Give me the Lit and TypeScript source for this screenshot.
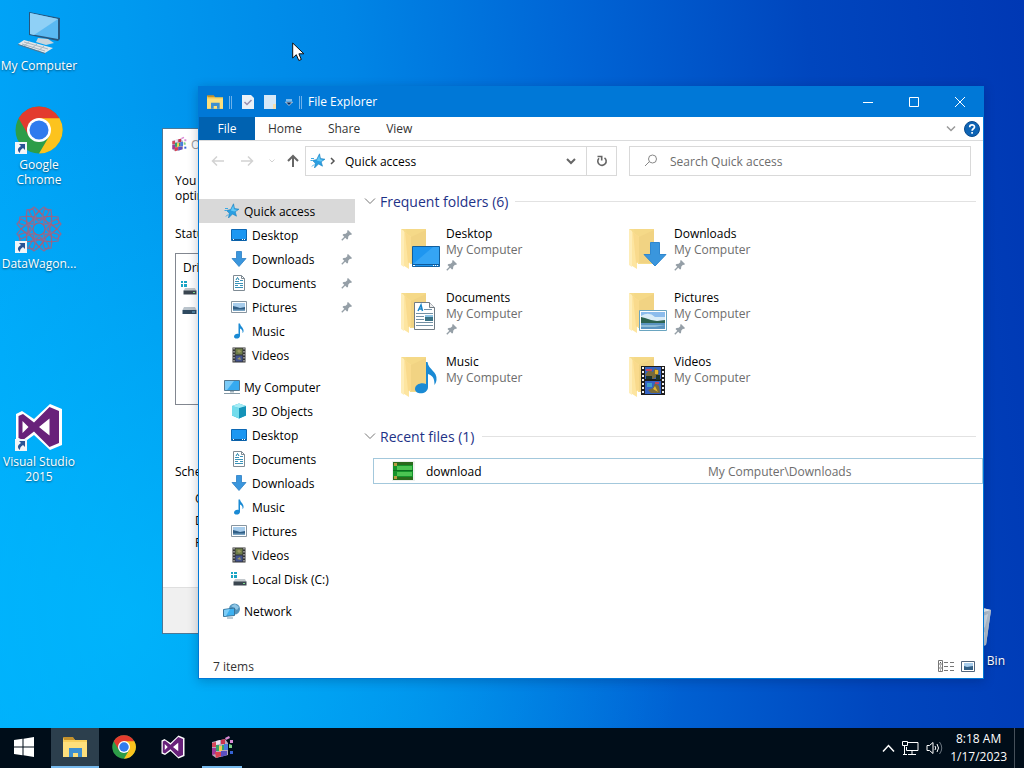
import { LitElement, html, svg, css, nothing, TemplateResult } from "lit";
import { customElement, state } from "lit/decorators.js";

const shape = (w: number, h: number, body: unknown, vw = w, vh = h) =>
  html`<svg class="ico" width=${w} height=${h} viewBox="0 0 ${vw} ${vh}" aria-hidden="true">${body}</svg>`;

const bigFolder = (overlay: unknown) =>
  shape(44, 44, svg`<path d="M5 2h25v35H14z" fill="#f6dc8c"/><path d="M10 2h20v34H17z" fill="#f5d988"/><path d="M15 10L30 3v33H15z" fill="#efcf80" opacity=".6"/>
    <path d="M5 2l10 8v25l-2 1v6l-8-5z" fill="#fde5a0"/><path d="M9 5l6 5v25l-3 1z" fill="#f9da8c"/><path d="M5 2v36l3 2V4z" fill="#feedb8"/>${overlay}`);

const drops: Record<string, () => TemplateResult> = {
  star: () => shape(16, 16, svg`<path d="M9.500.8l1 4.700 4.500.7-3.800 2.600 1.300 4.400-4-2.200L4.500 15l.8-4.800L2.500 7.500l4.200-1z" fill="#2a9fe2" stroke="#1b82c0" stroke-width=".6"/><path d="M9.300 2.500l.7 3.800 3.400.6-3 1.600-3.600-1z" fill="#63c8f6"/><path d="M1 5.500h3M.5 7.500h2M2 13.500l2-2" stroke="#3ba8e4"/>`),
  desktop: () => shape(16, 16, svg`<path d="M.5 2.500h15v11H.5z" fill="#1c97f2" stroke="#0d68b4"/><path d="M1 12h14v1.500H1z" fill="#0b5a9c"/><path d="M2 12.500h1M11 12.500h1M13 12.500h1" stroke="#fff"/>`),
  downloads: () => shape(16, 16, svg`<path d="M5.500.5h5v7h4.500L8 15.500 1 7.500h4.500z" fill="#3a96dd" stroke="#2b7fc4" stroke-width=".8"/>`),
  documents: () => shape(16, 16, svg`<path d="M2.500.5h8l3 3v12h-11z" fill="#fff" stroke="#7f8b94"/><path d="M10.500.5v3h3" fill="none" stroke="#7f8b94"/><path d="M4 6.500h4M9 5.500h3M4 8.500h8M4 10.500h3M9 10.500h3M4 12.500h8" stroke="#3b93b8"/><path d="M5 5l1.500-2.500L8 5" fill="none" stroke="#1b7fa8"/>`),
  pictures: () => shape(16, 16, svg`<path d="M.5 2.500h15v11H.5z" fill="#fff" stroke="#8795a0"/><path d="M2 4h12v8H2z" fill="#a8cdec"/><path d="M2 7l4 1 3 1 5-1v4H2z" fill="#315f86"/><path d="M2 10.500h12V12H2z" fill="#7aa5c4"/>`),
  music: () => shape(16, 16, svg`<path d="M7.500.5H9c.5 3.500 4 4 3.500 8-.3 1-.8 1.500-1 1.500.5-2.500-1-4-2.500-4.500V13c0 3-6 3.500-6 .8 0-2.500 3-3.500 4.500-2.700z" fill="#1a8ad4"/>`),
  videos: () => shape(16, 16, svg`<path d="M1.500.5h13v15h-13z" fill="#333"/><path d="M3 1v14M13 1v14" stroke="#e8e8e8" stroke-dasharray="1.500 1.500"/><path d="M4.500 1.500h7v6h-7z" fill="#6f7f4a"/><path d="M4.500 8.500h7v6h-7z" fill="#43538e"/><path d="M6 4l2-1.500 2.500 2L8 6zM6 12l3-2 1 3z" fill="#9a9860"/>`),
  computer: () => shape(18, 16, svg`<path d="M1.500 1.500h15v10h-15z" fill="#35aaf0" stroke="#54788f"/><path d="M2 2h9L4 11H2z" fill="#7bcbf8"/><path d="M7 12h4v1.500H7z" fill="#9fb1bc"/><path d="M1 14.500h16" stroke="#8599a5"/>`),
  objects: () => shape(16, 16, svg`<path d="M1 3l7-2.500L15 3v9.500L8 15.500 1 12.500z" fill="#2bb3d2"/><path d="M1 3l7 2v10.500l-7-3z" fill="#73dcec"/><path d="M15 3L8 5v10.500l7-3z" fill="#1593b8"/><path d="M1 3l7-2.500L15 3 8 5z" fill="#a6edf6"/>`),
  disk: () => shape(16, 16, svg`<path d="M0 1h2v2H0zM3 1h3v2H3zM0 4h2v3H0zM3 4h3v3H3z" fill="#1aa5c4"/><path d="M4 8h10l1.500 3h-13z" fill="#c2c8cc"/><path d="M2.500 10.500h13v4h-13z" fill="#3b4650"/><path d="M12 12.500h2" stroke="#7fdc8f"/>`),
  drive: () => shape(16, 16, svg`<path d="M3 6h11l1.500 3h-14z" fill="#bac4cc"/><path d="M1.500 9h14v4h-14z" fill="#2f4a60"/><path d="M11 11h3" stroke="#6fb7dd"/>`),
  network: () => shape(18, 16, svg`<circle cx="11.500" cy="6" r="5.500" fill="#5294bd"/><path d="M8 3l4-2 4 3-2 3-3-2z" fill="#8fc6e6"/><path d="M.5 6.500l11-1.500v7.500l-11 1z" fill="#3db1f1" stroke="#39749a"/><path d="M1 7l6-1-4 7H1z" fill="#7dcdf7"/><path d="M4 15h6" stroke="#7d97a7"/>`),
};

const bigDrops: Record<string, unknown> = {
  desktop: svg`<path d="M16.500 19.500h27v20h-27z" fill="#1e96f0" stroke="#125f9e"/><path d="M17 37l20-17h6v17z" fill="#45aff8" opacity=".6"/><path d="M17 37.500h26" stroke="#0e5a9a"/><path d="M17 38.500h2M37 38.500h1M39 38.500h1M41 38.500h1" stroke="#fff"/>`,
  downloads: svg`<path d="M26.500 15.500h9v12h6.500L31 39 20 27.500h6.500z" fill="#3a96dd" stroke="#2f87cf"/>`,
  documents: svg`<path d="M18.500 11.500h15l5 5v22h-20z" fill="#fff" stroke="#707b84"/><path d="M33.500 11.500v5h5" fill="#eee" stroke="#707b84"/><path d="M22 20l3-6 1.500 6m-4-2h4" fill="none" stroke="#1a86c9" stroke-width="1.500"/><path d="M28 18.500h8M20 22.500h17M20 25.500h8M20 28.500h8M20 31.500h17M20 34.500h17" stroke="#7390a4"/><path d="M29 24h8v6h-8z" fill="#3a7386"/><path d="M29 24h8v2h-8z" fill="#8fc4e4"/>`,
  pictures: svg`<path d="M15.500 19.500h27v20h-27z" fill="#fff" stroke="#6aa5c0"/><path d="M17 21h24v17H17z" fill="#8cbcec"/><path d="M17 25q8-5 14 1h10v4H17z" fill="#d9ecf7"/><path d="M17 26l4 1 6 2 6 1 8-1v3H17z" fill="#2d6350"/><path d="M17 32h24v6H17z" fill="#5a94c0"/><path d="M17 34h24l-10 2H17z" fill="#8fbcd6"/>`,
  music: svg`<path d="M30 7h1.500c1 8 10 9 9 18-.5 3-1.500 4-2 5 0-6-1-9-6.500-11v13c0 8-13 8-13 2 0-5 7-7 11-5z" fill="#1a8ad4"/>`,
  videos: svg`<path d="M17 11h24v29H17z" fill="#1d1d1d"/><path d="M19 12v27M39 12v27" stroke="#f2f2f2" stroke-width="2" stroke-dasharray="2 2"/><path d="M21 12h16v12H21zM21 26h16v13H21z" fill="#3463c4"/><path d="M21 20l4-5 4 2 2-4 4 3-1 5-5 3zM24 35l5-2 2-5 4 3 1 7h-9z" fill="#7a6b3a"/><path d="M31 15h3v4h-3zM31 31l-2 3 5 3z" fill="#e4b52c"/><path d="M22 14h6v2h-6zM31 27h4v2h-4z" fill="#c1455f"/><path d="M22 21h6v3h-6zM32 20h4v5h-4z" fill="#1c3530"/><path d="M23 28h5v4h-5z" fill="#3fa0c8"/>`,
};

const pin = shape(12, 12, svg`<path d="M7 1l4 4-1 1-1-.3L7.300 7.500 7 10 6 10.500 1.500 6l1-1 2.200-.2L6.500 3 6 2z" fill="#959fa7"/><path d="M4 8L.8 11.200" stroke="#959fa7" stroke-width="1.300"/>`);

const chrome = (s: number) => shape(s, s, svg`
  <circle cx="24" cy="24" r="23.500" fill="#2d9d48"/>
  <path d="M24 12h20.400A23.500 23.500 0 0 1 24 47.500L34.400 30z" fill="#fcc31e"/>
  <path d="M3.600 12.300A23.500 23.500 0 0 1 44.400 12.300H24L13.600 29.600z" fill="#e33b2e"/>
  <circle cx="24" cy="24" r="12" fill="#fff"/><circle cx="24" cy="24" r="9.500" fill="#2f7bee"/>`, 48, 48);

const visualStudio = (s: number) => shape(s, s, svg`
  <path d="M35 1l12 5v36l-12 5-16-15-11 8-7-3V11l6-3 12 8z" fill="#fff"/>
  <path d="M34.500 4L44 8v32l-9.500 4L19 28.500 8 37l-4.500-2V13L8 11l11 8.500z" fill="#68217a"/>
  <path d="M34.500 15.500v17L24 24zM7.500 18v12l6-6z" fill="#fff"/>`, 48, 48);

const explorerIcon = (w: number, h: number) => shape(w, h, svg`
  <path d="M0 3h10l2 2h12v17H0z" fill="#f7cf5c"/><path d="M0 2h10l2 3H1z" fill="#c4912c"/><path d="M0 7h24v15H0z" fill="#fddf7c"/>
  <path d="M6 22v-9h13v9h-4v-4h-5v4z" fill="#3d8fd1"/>`, 24, 24);

const defrag = (s: number) => shape(s, s, svg`
  <path d="M2 7l13-3 3 4v12L6 23l-4-3z" fill="#b7a9bb"/>
  <path d="M2 8l4-1v5H2z" fill="#d7475a"/><path d="M6 6l4-1v4l-4 1z" fill="#efe0ef"/><path d="M11 5l4-1v5h-4z" fill="#cb3350"/>
  <path d="M6 10h3v6H6zM12 10h2v5h-2z" fill="#37a26a"/><path d="M9 11h3v5H9z" fill="#f4d04e"/><path d="M14 9h4v6h-4z" fill="#4a7ddc"/>
  <path d="M2 13h4v6l-4 1z" fill="#9d3b9b"/><path d="M5 17h6v4l-5 2z" fill="#db4253"/><path d="M11 16h6v4l-6 2z" fill="#5b4fc0"/>
  <path d="M15 3l4-2 1 2-4 2zM20 5h3v3h-3z" fill="#d98bd6"/><path d="M19 9l3 1v3h-3z" fill="#7fd08a"/><path d="M20 16h3v3h-3z" fill="#3663d4"/>`, 24, 24);

const bigComputer = shape(48, 48, svg`
  <path d="M14 5l31 6v21l-2 2-29-6z" fill="#26567e"/><path d="M15 6l28 6v20L15 27z" fill="#5ab9f2"/><path d="M15 6l28 6-24 16-4-1z" fill="#8fd0f6"/>
  <path d="M23 31l10 1 6 4-8 2-10-3z" fill="#c9d5dc"/><path d="M9 33l29 8-8 5L3 37z" fill="#e2e7ea"/><path d="M9 35l24 7M7 37l23 7M15 34l-6 5M22 37l-6 5M29 39l-6 5" stroke="#a8b6c0"/>
  <path d="M3 37l27 9v1L3 38z" fill="#54758c"/>`);

const petals = [0, 45, 90, 135, 180, 225, 270, 315];
const mandala = shape(48, 48, svg`<g fill="none" stroke="#8f6a90" stroke-width="1.200">
  ${petals.map((a) => svg`<g transform="rotate(${a} 24 24)"><path d="M24 6l5-4 5 4-4 8 4 6M24 6l-5-4-5 4 4 8-4 6"/><path d="M24 17l-5-5 5-6 5 6z" stroke="#a85f78"/><path d="M17 12l7 5 7-5" stroke="#6f7cab"/></g>`)}
  <circle cx="24" cy="24" r="6" stroke="#a85f78"/></g>`);

const bin = shape(48, 48, svg`<path d="M8 8l16-4 17 4-5 35-12 3-11-3z" fill="#c8d3dd"/><path d="M8 8l16 5 17-5-17-4z" fill="#eef3f6"/><path d="M24 13l17-5-5 35-12 3z" fill="#b3c0ce"/><path d="M33 14l5-2-3 13-4 3zM32 32l3-2-1 10-4 2z" fill="#d6dfe7"/>`);

const shortcut = html`<svg class="shortcut" width="12" height="12" viewBox="0 0 12 12" aria-hidden="true"><path d="M0 0h12v12H0z" fill="#f2f5f8"/><path d="M4 2h6v6L8 6C5.500 7.500 5 9 5 11 1.500 8.500 3 5.500 6 4z" fill="#2a5394"/></svg>`;

const stroke = (d: string, w: number, h: number, width = 1) =>
  shape(w, h, svg`<path d=${d} fill="none" stroke="currentColor" stroke-width=${width}/>`);

interface Shortcut { label: string; art: TemplateResult; linked: boolean; row: number }
const shortcuts: Shortcut[] = [
  { label: "My Computer", art: bigComputer, linked: false, row: 1 },
  { label: "Google Chrome", art: chrome(48), linked: true, row: 2 },
  { label: "DataWagon...", art: mandala, linked: true, row: 3 },
  { label: "Visual Studio 2015", art: visualStudio(48), linked: true, row: 5 },
];

interface Place { label: string; icon: string; pinned?: boolean }
const tree: { root: Place; children: Place[] }[] = [
  {
    root: { label: "Quick access", icon: "star" },
    children: [
      { label: "Desktop", icon: "desktop", pinned: true },
      { label: "Downloads", icon: "downloads", pinned: true },
      { label: "Documents", icon: "documents", pinned: true },
      { label: "Pictures", icon: "pictures", pinned: true },
      { label: "Music", icon: "music" },
      { label: "Videos", icon: "videos" },
    ],
  },
  {
    root: { label: "My Computer", icon: "computer" },
    children: [
      { label: "3D Objects", icon: "objects" },
      { label: "Desktop", icon: "desktop" },
      { label: "Documents", icon: "documents" },
      { label: "Downloads", icon: "downloads" },
      { label: "Music", icon: "music" },
      { label: "Pictures", icon: "pictures" },
      { label: "Videos", icon: "videos" },
      { label: "Local Disk (C:)", icon: "disk" },
    ],
  },
  { root: { label: "Network", icon: "network" }, children: [] },
];

const folders: Place[] = [
  { label: "Desktop", icon: "desktop", pinned: true },
  { label: "Downloads", icon: "downloads", pinned: true },
  { label: "Documents", icon: "documents", pinned: true },
  { label: "Pictures", icon: "pictures", pinned: true },
  { label: "Music", icon: "music" },
  { label: "Videos", icon: "videos" },
];

const base = css`
  * { box-sizing: border-box; }
  button, input { font: inherit; color: inherit; background: none; border: 0; padding: 0; margin: 0; text-align: left; }
  h1, h2, p, ul { margin: 0; padding: 0; font: inherit; list-style: none; }
  .ico { display: block; flex: none; }
`;

@customElement("optimize-window")
class OptimizeWindow extends LitElement {
  static styles = [base, css`
    :host { display: flex; flex-direction: column; background: #fff; border: 1px solid #4d7896; color: #000; white-space: nowrap; overflow: hidden; }
    .title { display: flex; align-items: center; gap: 4px; height: 30px; padding-left: 8px; color: #999; }
    .body { flex: 1; display: flex; flex-direction: column; padding: 14px 12px 0; line-height: 15px; }
    .status { margin-top: 23px; }
    .drives { margin-top: 12px; height: 152px; border: 1px solid #828790; padding: 6px 7px; display: flex; flex-direction: column; gap: 5px; }
    .drives .ico { margin-left: -2px; }
    .schedule { margin-top: 59px; }
    .details { padding: 9px 0 0 20px; line-height: 22px; }
    .foot { height: 46px; background: #f0f0f0; border-top: 1px solid #dfdfdf; }
  `];
  render() {
    return html`
      <div class="title">${defrag(16)}<span>Optimize Drives</span></div>
      <div class="body">
        <p>You can</p>
        <p>optimize</p>
        <p class="status">Status</p>
        <div class="drives"><span>Drive</span>${drops.disk()}${drops.drive()}</div>
        <p class="schedule">Scheduled</p>
        <div class="details"><p>On</p><p>Drives</p><p>Frequency</p></div>
      </div>
      <div class="foot"></div>`;
  }
}

@customElement("explorer-window")
class ExplorerWindow extends LitElement {
  static styles = [base, css`
    :host { display: flex; flex-direction: column; background: #fff; border: 1px solid #0078d7; color: #000; box-shadow: 0 2px 10px rgba(0, 20, 60, .25); }
    .title { display: flex; align-items: center; height: 30px; background: #0078d7; color: #fff; padding-left: 8px; }
    .title h1 { padding-bottom: 1px; }
    .quick { display: flex; align-items: center; gap: 9px; margin-right: 6px; }
    .bar { width: 3px; height: 13px; border: solid #6fb2ea; border-width: 0 1px; margin-left: -3px; }
    .caption { margin-left: auto; display: flex; }
    .caption button { width: 46px; height: 30px; display: grid; place-items: center; }
    .tabs { display: flex; align-items: center; height: 24px; border-bottom: 1px solid #dadbdc; color: #333; }
    .tabs button { height: 23px; padding: 0 13px; }
    .tabs .file { width: 56px; padding: 0; text-align: center; background: #0062b1; color: #fff; }
    .tabs .end { margin-left: auto; display: flex; align-items: center; gap: 8px; padding-right: 3px; color: #999; }
    .tabs .end button { padding: 0; display: grid; place-items: center; }
    .help { width: 16px; }
    .nav { display: flex; align-items: center; height: 40px; padding: 0 12px; }
    .arrows { display: flex; align-items: center; width: 94px; gap: 15px; color: #d2d2d2; }
    .arrows .up { color: #666; }
    .arrows .recent { width: 6px; margin-right: -4px; }
    .address { flex: 0 1 312px; height: 30px; display: flex; align-items: center; border: 1px solid #d9d9d9; }
    .crumb { flex: 1; display: flex; align-items: center; gap: 4px; padding-left: 4px; color: #555; }
    .crumb button { padding-left: 5px; color: #000; }
    .address .drop, .address .refresh { width: 30px; height: 28px; display: grid; place-items: center; color: #666; }
    .address .refresh { border-left: 1px solid #d9d9d9; }
    .search { flex: 1; margin-left: 12px; height: 30px; display: flex; align-items: center; gap: 12px; border: 1px solid #d9d9d9; padding-left: 14px; color: #888; }
    .search input { flex: 1; min-width: 0; outline: 0; color: #333; }
    .search input::placeholder { color: #6d6d6d; opacity: 1; }
    .work { flex: 1; min-height: 0; display: flex; padding-top: 18px; }
    .tree { width: 156px; flex: none; }
    .tree ul { display: flex; flex-direction: column; margin-bottom: 8px; }
    .node { width: 100%; height: 24px; display: flex; align-items: center; gap: 5px; padding: 0 2px 0 32px; }
    .node.root { padding-left: 24px; gap: 3px; }
    .node.root .ico { width: 18px; }
    .node.on { background: #d9d9d9; }
    .node span { flex: 1; }
    .files { flex: 1; min-width: 0; padding: 0 0 0 9px; }
    .group { display: flex; align-items: center; gap: 4px; height: 20px; color: #1e3287; font-size: 14px; margin: -8px 7px 0 0; }
    .group::after { content: ""; flex: 1; height: 1px; background: #e2e2e2; margin-left: 3px; }
    .group .ico { color: #777; }
    .tiles { display: grid; grid-template-columns: 228px 228px; grid-auto-rows: 64px; padding: 15px 0 0 32px; }
    .tile { display: flex; align-items: flex-start; gap: 6px; height: 48px; line-height: 16px; }
    .art { padding-top: 1px; }
    .sub { color: #6d6d6d; display: block; }
    .tile .pin { display: block; padding-top: 1px; }
    .recent-head { margin-top: 8px; }
    .file-row { width: calc(100% - 9px); height: 26px; margin: 12px 0 0 9px; border: 1px solid #a3c8dc; display: flex; align-items: center; padding-left: 18px; }
    .file-row .name { flex: 0 0 293px; padding-left: 11px; }
    .file-row .where { color: #6d6d6d; }
    .foot { height: 24px; display: flex; align-items: center; padding: 0 8px 0 14px; color: #333; }
    .views { margin-left: auto; display: flex; gap: 6px; }
  `];

  @state() private current = "Quick access";

  private node(p: Place, root: boolean) {
    return html`<li><button class="node ${root ? "root" : ""} ${root && p.label === this.current ? "on" : ""}"
      @click=${() => { if (root) this.current = p.label; }}>
      ${drops[p.icon]()}<span>${p.label}</span>${p.pinned ? pin : nothing}</button></li>`;
  }

  render() {
    return html`
      <header class="title">
        <div class="quick">
          ${explorerIcon(16, 16)}<i class="bar"></i>
          ${shape(14, 16, svg`<path d="M1 1h9l3 3v11H1z" fill="#eaf1f8"/><path d="M3.500 8L6 10.500 10.500 6" fill="none" stroke="#9a8fae" stroke-width="1.500"/>`)}
          ${shape(12, 16, svg`<path d="M0 1h12v14H0z" fill="#d5e8f8"/><path d="M9 10h3v5H9z" fill="#f4deb0"/>`)}
          ${shape(8, 8, svg`<path d="M1 2h6" stroke="#fff"/><path d="M.5 4h7L4 7.500z" fill="#0a2a5c" stroke="#fff" stroke-width=".7"/>`)}
          <i class="bar"></i>
        </div>
        <h1>File Explorer</h1>
        <div class="caption">
          <button aria-label="Minimize">${stroke("M0 5.500h10", 10, 10)}</button>
          <button aria-label="Maximize">${stroke("M.5.5h9v9h-9z", 10, 10)}</button>
          <button aria-label="Close">${stroke("M0 0l10 10M10 0L0 10", 10, 10)}</button>
        </div>
      </header>
      <div class="tabs">
        <button class="file">File</button><button>Home</button><button>Share</button><button>View</button>
        <div class="end">
          <button aria-label="Expand ribbon">${stroke("M1 1.500l4 4 4-4", 10, 7, 1.5)}</button>
          <button class="help" aria-label="Help">
            <svg class="ico" width="16" height="16" viewBox="0 0 16 16"><circle cx="8" cy="8" r="7.500" fill="#0e64b4" stroke="#0a4a8c"/><path d="M5.700 6.200C5.700 3.200 10.500 3.200 10.500 6c0 1.800-2.400 1.800-2.400 3.700M8.100 11v1.800" fill="none" stroke="#fff" stroke-width="1.700"/></svg>
          </button>
        </div>
      </div>
      <div class="nav">
        <div class="arrows">
          <button aria-label="Back">${stroke("M13 7H1.500M6 2.500L1.500 7 6 11.500", 14, 14, 1.5)}</button>
          <button aria-label="Forward">${stroke("M1 7h11.500M8 2.500L12.500 7 8 11.500", 14, 14, 1.5)}</button>
          <button class="recent" aria-label="Recent locations">${stroke("M.5.5L3 3 5.500.5", 6, 4)}</button>
          <button class="up" aria-label="Up">${stroke("M7 13V2M2 7l5-5 5 5", 14, 14, 2)}</button>
        </div>
        <div class="address">
          <div class="crumb">${drops.star()}${stroke("M1 1l3 3-3 3", 6, 8, 1.5)}<button>Quick access</button></div>
          <button class="drop" aria-label="Previous locations">${stroke("M1 1l4 4 4-4", 10, 7, 2)}</button>
          <button class="refresh" aria-label="Refresh">${shape(12, 12, svg`<path d="M3 3.200A4.200 4.200 0 1 0 8.500 2.800" fill="none" stroke="currentColor" stroke-width="1.600"/><path d="M1.500 1.500h4.200v4" fill="none" stroke="currentColor" stroke-width="1.600"/>`)}</button>
        </div>
        <label class="search">
          ${stroke("M1 12l4-4M4.500 5a4 4 0 1 0 8 0 4 4 0 1 0-8 0", 14, 14)}
          <input type="text" placeholder="Search Quick access" aria-label="Search Quick access" />
        </label>
      </div>
      <div class="work">
        <nav class="tree">
          ${tree.map((s) => html`<ul>${this.node(s.root, true)}${s.children.map((c) => this.node(c, false))}</ul>`)}
        </nav>
        <main class="files">
          <h2 class="group">${stroke("M1 1.500l5 5 5-5", 12, 8)}Frequent folders (6)</h2>
          <div class="tiles">
            ${folders.map((f) => html`<button class="tile"><span class="art">${bigFolder(bigDrops[f.icon])}</span>
              <span>${f.label}<span class="sub">My Computer</span>${f.pinned ? html`<span class="pin">${pin}</span>` : nothing}</span></button>`)}
          </div>
          <h2 class="group recent-head">${stroke("M1 1.500l5 5 5-5", 12, 8)}Recent files (1)</h2>
          <button class="file-row">
            ${shape(23, 20, svg`<path d="M0 0h23v20H0z" fill="#eef1ee"/><path d="M1 1h20v18H1z" fill="#14922b"/><path d="M1 1h20v3H1zM1 16h20v3H1z" fill="#2a6a1c"/><path d="M5 5h15v4H5zM5 11h15v4H5z" fill="#4cc452"/><path d="M1 9h20v1H1z" fill="#0a6d1e"/><path d="M2 2h3v3H2zM2 15h3v3H2z" fill="#b79a3f"/>`)}
            <span class="name">download</span><span class="where">My Computer\\Downloads</span>
          </button>
        </main>
      </div>
      <footer class="foot">
        <span>7 items</span>
        <div class="views">
          <button aria-label="Details view">${shape(17, 14, svg`<path d="M.5 1.500h4v11h-4zM.5 5h4M.5 9h4" fill="none" stroke="#777"/><path d="M2 3.500h1M2 7h1M2 11h1" stroke="#555"/><path d="M6 3.500h4M12 3.500h4M6 7.500h4M12 7.500h4M6 11.500h4M12 11.500h4" stroke="#777"/>`)}</button>
          <button aria-label="Large icons view">${shape(14, 14, svg`<path d="M.5 2.500h13v10H.5z" fill="#fff" stroke="#51657c"/><path d="M3 4h9v7H3z" fill="#a8cdec"/><path d="M3 7l3 1 6-1v4H3z" fill="#315f86"/>`)}</button>
        </div>
      </footer>`;
  }
}

@customElement("app-root")
class AppRoot extends LitElement {
  static styles = [base, css`
    :host { display: grid; grid-template-rows: 1fr 40px; height: 100vh; overflow: hidden; font: 12px/15px "Open Sans", "Noto Sans", sans-serif; color: #fff; }
    .desktop { position: relative; overflow: hidden;
      background: radial-gradient(ellipse 55% 70% at 12% 85%, rgba(0, 190, 255, .65), rgba(0, 190, 255, 0)), linear-gradient(84deg, #00a8fa 0%, #009af0 18%, #0086e6 38%, #0066d6 58%, #0046be 80%, #0038b4 100%); }
    .icons { display: grid; grid-template-columns: 78px; grid-auto-rows: 99px; padding-top: 7px; }
    .shortcut-item { display: flex; flex-direction: column; align-items: center; gap: 3px; text-align: center; text-shadow: 0 1px 2px rgba(0, 0, 0, .5); }
    .art { position: relative; }
    .shortcut { position: absolute; left: 0; bottom: 0; }
    .bin { position: absolute; right: 19px; bottom: 60px; }
    optimize-window { position: absolute; left: 162px; top: 128px; bottom: 94px; width: 420px; }
    explorer-window { position: absolute; left: 198px; top: 86px; bottom: 49px; right: 40px; }
    .pointer { position: absolute; left: 292px; top: 42px; }
    .taskbar { display: flex; align-items: stretch; background: #000d19; }
    .apps { display: flex; gap: 1px; }
    .apps button { width: 48px; display: grid; place-items: center; border-bottom: 2px solid transparent; }
    .apps .start { margin-right: 2px; }
    .apps .active { background: #2c3f4d; border-color: #76b9ed; }
    .apps .running { position: relative; }
    .apps .running::after { content: ""; position: absolute; left: 4px; right: 4px; bottom: -2px; height: 2px; background: #76b9ed; }
    .tray { margin-left: auto; display: flex; align-items: center; gap: 7px; }
    .clock { text-align: center; line-height: 18px; }
    .peek { width: 10px; height: 40px; border-left: 1px solid #46505a; }
  `];

  private item(s: Shortcut) {
    return html`<button class="shortcut-item" style="grid-row:${s.row}">
      <span class="art">${s.art}${s.linked ? shortcut : nothing}</span><span class="label">${s.label}</span></button>`;
  }

  render() {
    return html`
      <div class="desktop">
        <div class="icons">${shortcuts.map((s) => this.item(s))}</div>
        <button class="shortcut-item bin">${bin}<span>Recycle Bin</span></button>
        <optimize-window></optimize-window>
        <explorer-window></explorer-window>
        <svg class="pointer" width="13" height="20" viewBox="0 0 13 20" aria-hidden="true"><path d="M.7 1v15l3.600-3.300L6.800 18.500l2.500-1-2.400-5.700h5z" fill="#fff" stroke="#111"/></svg>
      </div>
      <footer class="taskbar">
        <div class="apps">
          <button class="start" aria-label="Start">${shape(20, 20, svg`<path d="M0 3l8.500-1.200v7.700H0zM9.500 1.700L20 0v9.500H9.500zM0 10.500h8.500v7.700L0 17zM9.500 10.500H20V20L9.500 18.300z" fill="#fff"/>`)}</button>
          <button class="active" aria-label="File Explorer">${explorerIcon(24, 24)}</button>
          <button aria-label="Google Chrome">${chrome(24)}</button>
          <button aria-label="Visual Studio 2015">${visualStudio(24)}</button>
          <button class="running" aria-label="Optimize Drives">${defrag(24)}</button>
        </div>
        <div class="tray">
          ${stroke("M1 7.500l5.500-6 5.500 6", 13, 9, 1.5)}
          ${shape(17, 16, svg`<path d="M5 2.500h11v8H4.500V7M10 11v3M6 14.500h8M.5 1.500h5v4h-5zM2.500 6v8M1 14.500h4" fill="none" stroke="#fff"/>`)}
          ${shape(17, 14, svg`<path d="M1 4.500h2.500L7 1.500v11L3.500 9.500H1zM9 5q1.500 2 0 4M11 3q3 4 0 8" fill="none" stroke="#fff"/><path d="M13.500 1q4.500 6 0 12" fill="none" stroke="#6c7680"/>`)}
          <div class="clock">8:18 AM<br />1/17/2023</div>
          <div class="peek"></div>
        </div>
      </footer>`;
  }
}
